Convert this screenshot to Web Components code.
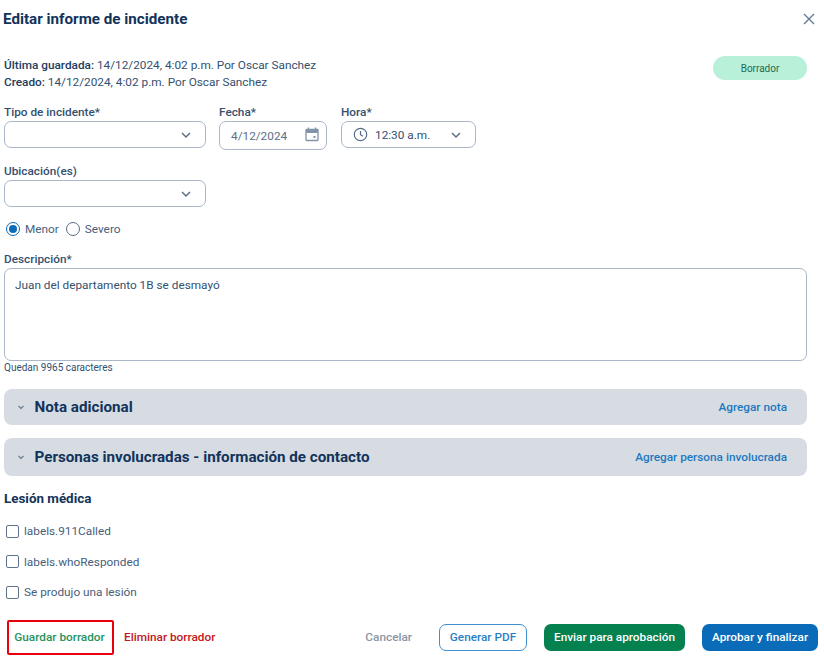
<!DOCTYPE html>
<html lang="es">
<head>
<meta charset="utf-8">
<title>Editar informe de incidente</title>
<style>
    html, body { margin: 0; padding: 0; background: #fff; }
    body { font-family: Roboto, "Liberation Sans", sans-serif; color: #0f2f52; width: 824px; height: 656px; overflow: hidden; }
</style>
</head>
<body>
<incident-dialog>
    <dialog-header slot="header" title="Editar informe de incidente"></dialog-header>
    <meta-info></meta-info>
    <div style="display:flex;gap:13px;margin-top:14px;height:50px">
        <form-field label="Tipo de incidente*" width="202"><select-box></select-box></form-field>
        <form-field label="Fecha*" width="108"><date-box></date-box></form-field>
        <form-field label="Hora*" width="135" style="margin-left:1px"><time-box></time-box></form-field>
    </div>
    <div style="margin-top:9px;height:50px">
        <form-field label="Ubicación(es)" width="202"><select-box></select-box></form-field>
    </div>
    <radio-group></radio-group>
    <desc-box></desc-box>
    <accordion-bar title="Nota adicional" action="Agregar nota" h="36"></accordion-bar>
    <accordion-bar title="Personas involucradas - información de contacto" action="Agregar persona involucrada" h="38" style="margin-top:13px"></accordion-bar>
    <injury-section></injury-section>
    <dialog-footer></dialog-footer>
</incident-dialog>

<script>
const chevron = `<svg width="12" height="12" viewBox="0 0 12 12" fill="none" style="margin-top:1px"><path d="M2 4l4 4 4-4" stroke="#5c7088" stroke-width="1.5"/></svg>`;

class IncidentDialog extends HTMLElement {
    constructor() {
        super();
        this.attachShadow({ mode: "open" });
        this.shadowRoot.innerHTML = `
        <style>
            :host { display: block; width: 824px; height: 656px; box-sizing: border-box; padding: 0 17px 0 4px; font-family: Roboto, "Liberation Sans", sans-serif; color: #0f2f52; }
        </style>
        <slot name="header"></slot>
        <slot></slot>`;
    }
}

class DialogHeader extends HTMLElement {
    constructor() {
        super();
        this.attachShadow({ mode: "open" });
        this.shadowRoot.innerHTML = `
        <style>
            :host { display: flex; justify-content: space-between; align-items: center; height: 38px; margin-left: -1px; margin-right: -9px; }
            .t { font-size: 15.2px; font-weight: 700; color: #12335a; }
            svg { display: block; }
        </style>
        <div class="t">${this.getAttribute("title")}</div>
        <svg width="12" height="12" viewBox="0 0 12 12" fill="none" style="margin-right:1px"><path d="M1 1l10 10M11 1L1 11" stroke="#5f7891" stroke-width="1.3"/></svg>`;
    }
}

class MetaInfo extends HTMLElement {
    constructor() {
        super();
        this.attachShadow({ mode: "open" });
        this.shadowRoot.innerHTML = `
        <style>
            :host { display: flex; justify-content: space-between; align-items: flex-start; margin-top: 19px; font-size: 11.8px; color: #34506f; }
            .l { line-height: 17px; }
            b { font-weight: 500; color: #1c3c60; }
            .badge { width: 94px; height: 24px; margin-top: -1px; border-radius: 12px; background: #b9f0da; color: #1f6b52; font-size: 10px; display: flex; align-items: center; justify-content: center; }
        </style>
        <div class="l">
            <div><b>Última guardada:</b> 14/12/2024, 4:02 p.m. Por Oscar Sanchez</div>
            <div><b>Creado:</b> 14/12/2024, 4:02 p.m. Por Oscar Sanchez</div>
        </div>
        <div class="badge">Borrador</div>`;
    }
}

class FormField extends HTMLElement {
    constructor() {
        super();
        this.attachShadow({ mode: "open" });
        this.shadowRoot.innerHTML = `
        <style>
            :host { display: block; width: ${this.getAttribute("width")}px; }
            .lab { font-size: 11.8px; font-weight: 500; line-height: 14px; color: #34506f; margin-bottom: 2px; }
        </style>
        <div class="lab">${this.getAttribute("label")}</div>
        <slot></slot>`;
    }
}

const boxCss = `
    :host { display: flex; align-items: center; box-sizing: border-box; height: 27px; border: 1px solid #a9b7c8; border-radius: 7px; background: #fff; font-size: 11.8px; color: #34506f; }
`;

class SelectBox extends HTMLElement {
    constructor() {
        super();
        this.attachShadow({ mode: "open" });
        this.shadowRoot.innerHTML = `
        <style>${boxCss} :host { justify-content: flex-end; padding-right: 13px; }</style>
        ${chevron}`;
    }
}

class DateBox extends HTMLElement {
    constructor() {
        super();
        this.attachShadow({ mode: "open" });
        this.shadowRoot.innerHTML = `
        <style>${boxCss} :host { height: 29px; justify-content: space-between; padding: 0 7px 0 11px; color: #5b7189; }</style>
        <span>4/12/2024</span>
        <svg width="14" height="15" viewBox="0 0 14 15" fill="none" style="margin-top:-3px">
            <path d="M1.5 2.5h11a.5.5 0 0 1 .5.5v10a.5.5 0 0 1-.5.5h-11A.5.5 0 0 1 1 13V3a.5.5 0 0 1 .5-.5z" stroke="#8294a8" stroke-width="1.3"/>
            <path d="M1 3h12v3H1z" fill="#8294a8"/>
            <path d="M3.5 .5v2M10.5 .5v2" stroke="#8294a8" stroke-width="1.4"/>
            <path d="M8.5 9h2v2h-2z" fill="#8294a8"/>
        </svg>`;
    }
}

class TimeBox extends HTMLElement {
    constructor() {
        super();
        this.attachShadow({ mode: "open" });
        this.shadowRoot.innerHTML = `
        <style>${boxCss} :host { padding: 0 13px 0 11px; } span { margin-left: 7px; flex: 1; } svg:first-child { margin-top: 2px; }</style>
        <svg width="15" height="15" viewBox="0 0 15 15" fill="none">
            <circle cx="7.5" cy="7.5" r="6.2" stroke="#566d86" stroke-width="1.2"/>
            <path d="M7.5 4v3.7l2.6 1.6" stroke="#566d86" stroke-width="1.2"/>
        </svg>
        <span>12:30 a.m.</span>
        ${chevron}`;
    }
}

class RadioGroup extends HTMLElement {
    constructor() {
        super();
        this.attachShadow({ mode: "open" });
        this.shadowRoot.innerHTML = `
        <style>
            :host { display: flex; align-items: center; margin-top: 6px; height: 18px; padding-left: 2px; font-size: 11.8px; color: #47607b; }
            .r { box-sizing: border-box; width: 14px; height: 14px; border-radius: 50%; border: 1.2px solid #566d86; display: flex; align-items: center; justify-content: center; margin-right: 5px; }
            .r.on { border-color: #0b6cb8; }
            .r.on::after { content: ""; width: 8px; height: 8px; border-radius: 50%; background: #0b6cb8; }
            span { margin-right: 7px; }
        </style>
        <div class="r on"></div><span>Menor</span>
        <div class="r"></div><span>Severo</span>`;
    }
}

class DescBox extends HTMLElement {
    constructor() {
        super();
        this.attachShadow({ mode: "open" });
        this.shadowRoot.innerHTML = `
        <style>
            :host { display: block; margin-top: 14px; margin-bottom: 15px; }
            .lab { font-size: 11.8px; font-weight: 500; line-height: 14px; color: #34506f; margin-bottom: 2px; }
            .area { box-sizing: border-box; height: 93px; border: 1px solid #a9b7c8; border-radius: 7px; padding: 9px 10px; font-size: 11.8px; line-height: 14px; color: #34506f; }
            .hint { font-size: 10px; line-height: 12px; margin-top: 1px; color: #34506f; }
        </style>
        <div class="lab">Descripción*</div>
        <div class="area">Juan del departamento 1B se desmayó</div>
        <div class="hint">Quedan 9965 caracteres</div>`;
    }
}

class AccordionBar extends HTMLElement {
    constructor() {
        super();
        this.attachShadow({ mode: "open" });
        this.shadowRoot.innerHTML = `
        <style>
            :host { display: flex; align-items: center; box-sizing: border-box; height: ${this.getAttribute("h")}px; background: #d7dce3; border-radius: 8px; padding: 0 20px 0 12px; }
            svg { margin-right: 8.5px; }
            .t { flex: 1; font-size: 15.2px; font-weight: 700; color: #12335a; }
            .a { font-size: 11.8px; font-weight: 500; color: #2178bf; }
        </style>
        <svg width="10" height="10" viewBox="0 0 10 10" fill="none"><path d="M2.5 4l2.5 2.5L7.5 4" stroke="#66798f" stroke-width="1.1"/></svg>
        <div class="t">${this.getAttribute("title")}</div>
        <div class="a">${this.getAttribute("action")}</div>`;
    }
}

class InjurySection extends HTMLElement {
    constructor() {
        super();
        this.attachShadow({ mode: "open" });
        this.shadowRoot.innerHTML = `
        <style>
            :host { display: block; margin-top: 15px; }
            h3 { margin: 0 0 9px; font-size: 13.4px; line-height: 16px; font-weight: 700; color: #12335a; }
            .row { display: flex; align-items: center; height: 30.5px; padding-left: 2px; font-size: 11.8px; color: #47607b; }
            .c { box-sizing: border-box; width: 13px; height: 13px; border: 1.2px solid #60758d; border-radius: 2px; margin-right: 5px; }
        </style>
        <h3>Lesión médica</h3>
        <div class="row"><div class="c"></div>labels.911Called</div>
        <div class="row"><div class="c"></div>labels.whoResponded</div>
        <div class="row"><div class="c"></div>Se produjo una lesión</div>`;
    }
}

class DialogFooter extends HTMLElement {
    constructor() {
        super();
        this.attachShadow({ mode: "open" });
        this.shadowRoot.innerHTML = `
        <style>
            :host { display: flex; align-items: center; margin: 12px -11px 0 3px; height: 35px; font-size: 11.8px; font-weight: 500; }
            .draft { box-sizing: border-box; width: 107px; height: 35px; padding-right: 2px; border: 2px solid #e8000d; border-radius: 2px; display: flex; align-items: center; justify-content: center; color: #1f9461; }
            .del { margin-left: 10px; color: #c4161c; flex: 1; }
            .cancel { color: #8b96a3; margin-right: 27px; }
            .btn { box-sizing: border-box; height: 27px; border-radius: 7px; display: flex; align-items: center; justify-content: center; }
            .pdf { width: 88px; border: 1px solid #3f8fd2; color: #2b80c6; margin-right: 17px; }
            .send { width: 141px; background: #05804f; color: #fff; margin-right: 17px; }
            .ok { width: 116px; background: #0a6cb9; color: #fff; }
        </style>
        <div class="draft">Guardar borrador</div>
        <div class="del">Eliminar borrador</div>
        <div class="cancel">Cancelar</div>
        <div class="btn pdf">Generar PDF</div>
        <div class="btn send">Enviar para aprobación</div>
        <div class="btn ok">Aprobar y finalizar</div>`;
    }
}

customElements.define('incident-dialog', IncidentDialog);
customElements.define('dialog-header', DialogHeader);
customElements.define('meta-info', MetaInfo);
customElements.define('form-field', FormField);
customElements.define('select-box', SelectBox);
customElements.define('date-box', DateBox);
customElements.define('time-box', TimeBox);
customElements.define('radio-group', RadioGroup);
customElements.define('desc-box', DescBox);
customElements.define('accordion-bar', AccordionBar);
customElements.define('injury-section', InjurySection);
customElements.define('dialog-footer', DialogFooter);
</script>
</body>
</html>
